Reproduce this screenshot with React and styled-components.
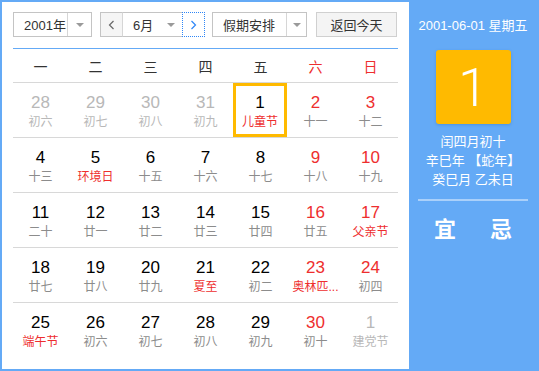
import React from "react";
import styled, { createGlobalStyle } from "styled-components";

const BLUE = "#64aaf6";
const RED = "#ee2e2e";
const ORANGE = "#ffba00";

const Global = createGlobalStyle`
  html, body { margin: 0; padding: 0; background: #fff; }
  body { font-family: "Liberation Sans", "Noto Sans CJK SC", sans-serif; }
  * { box-sizing: border-box; }
`;

const Frame = styled.div`
  width: 539px;
  height: 371px;
  border: 2px solid ${BLUE};
  background: ${BLUE};
  display: flex;
`;

const Left = styled.div`
  width: 407px;
  background: #fff;
  padding: 10px 11px 0 11px;
  display: flex;
  flex-direction: column;
`;

const Toolbar = styled.div`
  display: flex;
  align-items: center;
  height: 25px;
`;

const Select = styled.div`
  display: flex;
  height: 25px;
  width: ${(p) => p.$w}px;
  margin-right: ${(p) => p.$mr || 0}px;
  border: 1px solid #c4c4c4;
  background: #fff;
  font-size: 13px;
  color: #333;
`;

const SelectText = styled.div`
  flex: 1;
  display: flex;
  align-items: center;
  white-space: nowrap;
  padding-left: ${(p) => p.$pl}px;
`;

const ArrowBox = styled.div`
  width: ${(p) => p.$w}px;
  display: flex;
  align-items: center;
  justify-content: center;
  border-left: ${(p) => (p.$divider ? "1px solid #d6d6d6" : "none")};
`;

const Tri = styled.span`
  width: 0;
  height: 0;
  border-left: 4px solid transparent;
  border-right: 4px solid transparent;
  border-top: 4px solid #9a9a9a;
`;

const MonthGroup = styled.div`
  display: flex;
  height: 25px;
  margin-right: 7px;
`;

const NavBtn = styled.div`
  width: 23px;
  height: 25px;
  display: flex;
  align-items: center;
  justify-content: center;
  background: ${(p) => (p.$focus ? "#fff" : "#f5f5f5")};
  border: ${(p) => (p.$focus ? `1px dotted #2f86f6` : "1px solid #c4c4c4")};
  border-right: ${(p) => (p.$focus ? `1px dotted #2f86f6` : "1px solid #d6d6d6")};
`;

const MonthSel = styled.div`
  width: 59px;
  display: flex;
  align-items: center;
  border-top: 1px solid #c4c4c4;
  border-bottom: 1px solid #c4c4c4;
  font-size: 13px;
  color: #333;
`;

const Button = styled.div`
  width: 81px;
  height: 25px;
  border: 1px solid #d0d0d0;
  background: #f4f4f4;
  display: flex;
  align-items: center;
  justify-content: center;
  font-size: 13px;
  color: #333;
  margin-left: 2px;
`;

const Grid = styled.div`
  margin-top: 11px;
  border-top: 1px solid ${BLUE};
`;

const HeadRow = styled.div`
  display: grid;
  grid-template-columns: repeat(7, 55px);
  height: 33px;
  align-items: center;
`;

const HeadCell = styled.div`
  text-align: center;
  font-size: 14px;
  color: ${(p) => (p.$red ? RED : "#333")};
`;

const Row = styled.div`
  display: grid;
  grid-template-columns: repeat(7, 55px);
  height: 55px;
  border-top: 1px solid #d8d8d8;
`;

const Cell = styled.div`
  display: flex;
  flex-direction: column;
  align-items: center;
  padding-top: ${(p) => (p.$today ? 7 : 10)}px;
  border: ${(p) => (p.$today ? `3px solid ${ORANGE}` : "none")};
  width: ${(p) => (p.$today ? 54 : 55)}px;
`;

const Num = styled.div`
  font-size: 17px;
  line-height: 20px;
  height: 20px;
  color: ${(p) => (p.$other ? "#b8b8b8" : p.$red ? RED : "#000")};
`;

const Lunar = styled.div`
  font-size: 12px;
  line-height: 16px;
  margin-top: 1px;
  white-space: nowrap;
  color: ${(p) => (p.$other ? "#b8b8b8" : p.$red ? RED : "#8c8c8c")};
`;

const Right = styled.div`
  flex: 1;
  display: flex;
  flex-direction: column;
  align-items: center;
  color: #fff;
  padding-top: 15px;
`;

const DateLine = styled.div`
  font-size: 13px;
  line-height: 18px;
  white-space: nowrap;
`;

const DayBox = styled.div`
  margin-top: 15px;
  width: 75px;
  height: 74px;
  border-radius: 3px;
  background: ${ORANGE};
  box-shadow: 0 1px 3px rgba(0, 80, 160, 0.25);
  display: flex;
  align-items: center;
  justify-content: center;
  font-family: Roboto, "Liberation Sans", sans-serif;
  font-weight: 300;
  font-size: 54px;
  color: #fff;
`;

const InfoLines = styled.div`
  margin-top: 8px;
  font-size: 13px;
  line-height: 19px;
  text-align: center;
  white-space: nowrap;
`;

const Divider = styled.div`
  margin-top: 10px;
  width: 110px;
  height: 2px;
  background: rgba(255, 255, 255, 0.45);
`;

const YiJi = styled.div`
  margin-top: 16px;
  display: flex;
  gap: 34px;
  font-size: 22px;
  font-weight: bold;
  line-height: 26px;
`;

const Chevron = ({ dir, color }) => (
  <svg width="7" height="10" viewBox="0 0 7 10">
    <polyline
      points={dir === "left" ? "5.5,1 1.5,5 5.5,9" : "1.5,1 5.5,5 1.5,9"}
      fill="none"
      stroke={color}
      strokeWidth="1.2"
    />
  </svg>
);

const weeks = ["一", "二", "三", "四", "五", "六", "日"];

const c = (d, l, o = {}) => ({ d, l, ...o });
const rows = [
  [
    c(28, "初六", { other: true }),
    c(29, "初七", { other: true }),
    c(30, "初八", { other: true }),
    c(31, "初九", { other: true }),
    c(1, "儿童节", { lred: true, today: true }),
    c(2, "十一", { red: true }),
    c(3, "十二", { red: true }),
  ],
  [
    c(4, "十三"),
    c(5, "环境日", { lred: true }),
    c(6, "十五"),
    c(7, "十六"),
    c(8, "十七"),
    c(9, "十八", { red: true }),
    c(10, "十九", { red: true }),
  ],
  [
    c(11, "二十"),
    c(12, "廿一"),
    c(13, "廿二"),
    c(14, "廿三"),
    c(15, "廿四"),
    c(16, "廿五", { red: true }),
    c(17, "父亲节", { red: true, lred: true }),
  ],
  [
    c(18, "廿七"),
    c(19, "廿八"),
    c(20, "廿九"),
    c(21, "夏至", { lred: true }),
    c(22, "初二"),
    c(23, "奥林匹...", { red: true, lred: true }),
    c(24, "初四", { red: true }),
  ],
  [
    c(25, "端午节", { lred: true }),
    c(26, "初六"),
    c(27, "初七"),
    c(28, "初八"),
    c(29, "初九"),
    c(30, "初十", { red: true }),
    c(1, "建党节", { other: true }),
  ],
];

export default function App() {
  return (
    <>
      <Global />
      <Frame>
        <Left>
          <Toolbar>
            <Select $w={79} $mr={8}>
              <SelectText $pl={10}>2001年</SelectText>
              <ArrowBox $w={24} $divider>
                <Tri />
              </ArrowBox>
            </Select>
            <MonthGroup>
              <NavBtn>
                <Chevron dir="left" color="#666" />
              </NavBtn>
              <MonthSel>
                <SelectText $pl={10}>6月</SelectText>
                <ArrowBox $w={22}>
                  <Tri />
                </ArrowBox>
              </MonthSel>
              <NavBtn $focus>
                <Chevron dir="right" color="#2f86f6" />
              </NavBtn>
            </MonthGroup>
            <Select $w={95} $mr={7}>
              <SelectText $pl={10}>假期安排</SelectText>
              <ArrowBox $w={20} $divider>
                <Tri />
              </ArrowBox>
            </Select>
            <Button>返回今天</Button>
          </Toolbar>
          <Grid>
            <HeadRow>
              {weeks.map((w, i) => (
                <HeadCell key={w} $red={i >= 5}>
                  {w}
                </HeadCell>
              ))}
            </HeadRow>
            {rows.map((r, ri) => (
              <Row key={ri}>
                {r.map((x, ci) => (
                  <Cell key={ci} $today={x.today}>
                    <Num $other={x.other} $red={x.red}>
                      {x.d}
                    </Num>
                    <Lunar $other={x.other} $red={x.lred}>
                      {x.l}
                    </Lunar>
                  </Cell>
                ))}
              </Row>
            ))}
          </Grid>
        </Left>
        <Right>
          <DateLine>2001-06-01 星期五</DateLine>
          <DayBox>1</DayBox>
          <InfoLines>
            <div>闰四月初十</div>
            <div>辛巳年 【蛇年】</div>
            <div>癸巳月 乙未日</div>
          </InfoLines>
          <Divider />
          <YiJi>
            <span>宜</span>
            <span>忌</span>
          </YiJi>
        </Right>
      </Frame>
    </>
  );
}
